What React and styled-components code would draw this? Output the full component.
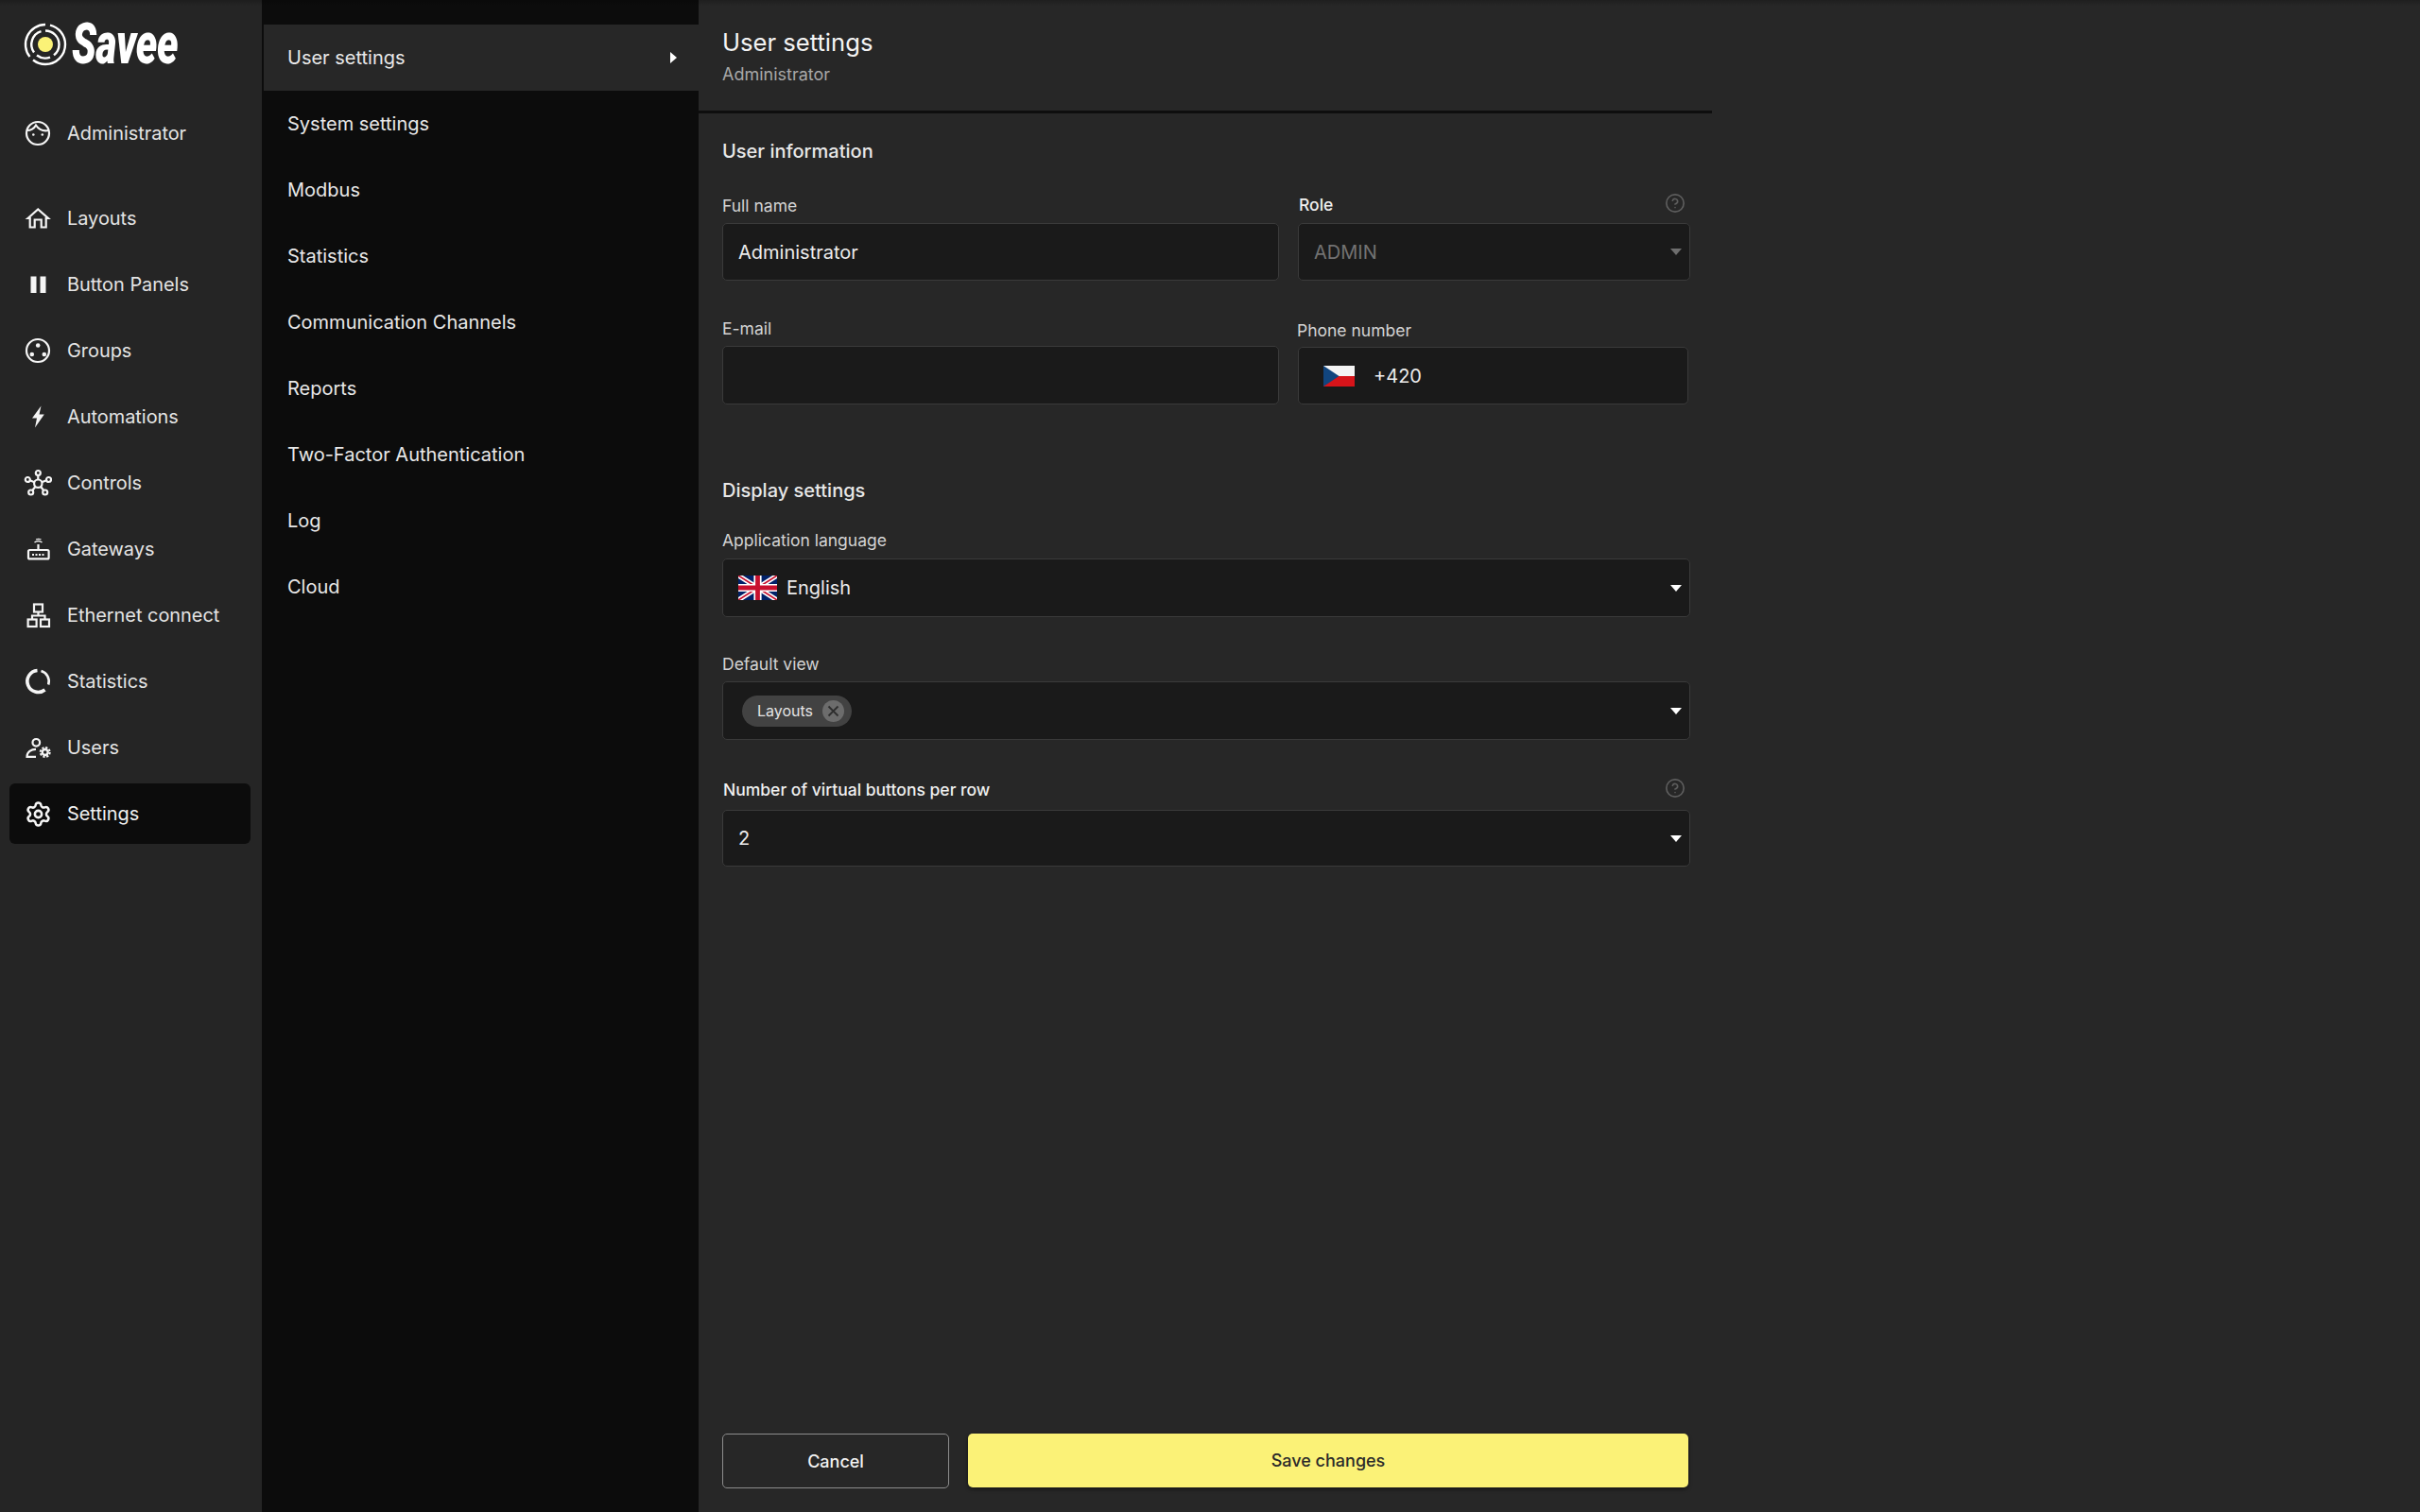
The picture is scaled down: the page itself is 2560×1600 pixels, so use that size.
import React from "react";
import styled, { createGlobalStyle } from "styled-components";
import { Settings as GearIcon, CircleHelp } from "lucide-react";

const Global = createGlobalStyle`
  html, body { margin: 0; padding: 0; height: 100%; background: #272727; }
  * { box-sizing: border-box; }
  body { font-family: Inter, "Noto Sans", sans-serif; color: #e8e8e8; -webkit-font-smoothing: antialiased; }
`;

const Page = styled.div`
  position: relative;
  display: flex;
  width: 100%;
  height: 100vh;
  min-height: 1600px;
  overflow: hidden;
  background: #272727;
  &::after {
    content: "";
    position: absolute;
    inset: 0 0 auto 0;
    height: 6px;
    background: linear-gradient(rgba(0, 0, 0, 0.22), rgba(0, 0, 0, 0));
    pointer-events: none;
  }
`;

const Sidebar = styled.nav`
  flex: 0 0 277px;
  display: flex;
  flex-direction: column;
  padding: 0 12px 0 10px;
  background: #252525;
`;

const LogoWrap = styled.div`
  height: 94px;
  margin-bottom: 15px;
  padding: 0 0 0 15px;
  display: flex;
  align-items: center;
  gap: 5px;
`;

const LogoText = styled.span`
  display: inline-block;
  font-family: Roboto, "Liberation Sans", sans-serif;
  font-style: italic;
  font-weight: 900;
  font-size: 61px;
  line-height: 1;
  color: #fff;
  letter-spacing: -0.5px;
  transform: scaleX(0.7);
  transform-origin: left center;
  position: relative;
  top: -1px;
`;

const NavGroup = styled.div`
  display: flex;
  flex-direction: column;
  gap: 6px;
  margin-bottom: ${(p) => p.$mb || 0}px;
`;

const NavItem = styled.a`
  display: flex;
  align-items: center;
  gap: 16px;
  height: 64px;
  padding-left: 15px;
  border-radius: 6px;
  font-size: 19.9px;
  color: ${(p) => (p.$active ? "#f0f0f0" : "#e4e4e4")};
  background: ${(p) => (p.$active ? "#0c0c0c" : "transparent")};
`;

const IconBox = styled.svg.attrs({ viewBox: "0 0 30 30", width: 30, height: 30, fill: "none" })`
  flex: 0 0 30px;
  stroke: #f5f5f5;
  stroke-width: 2.2;
`;

const LucideBox = styled.span`
  flex: 0 0 30px;
  display: flex;
  align-items: center;
  justify-content: center;
  color: #f5f5f5;
`;

const SubMenu = styled.div`
  flex: 0 0 462px;
  padding: 26px 0 0 2px;
  background: #0c0c0c;
  display: flex;
  flex-direction: column;
`;

const SubItem = styled.a`
  display: flex;
  align-items: center;
  justify-content: space-between;
  height: 70px;
  padding: 0 23px 0 25px;
  font-size: 20px;
  color: #e8e8e8;
  background: ${(p) => (p.$active ? "#272727" : "transparent")};
`;

const RightCaret = styled.span`
  width: 0;
  height: 0;
  border-left: 7px solid #fff;
  border-top: 6px solid transparent;
  border-bottom: 6px solid transparent;
`;

const Main = styled.main`
  flex: 0 0 1072px;
  display: flex;
  flex-direction: column;
  background: #272727;
`;

const Header = styled.header`
  height: 120px;
  padding: 27px 25px 0;
  border-bottom: 3px solid #0e0e0e;
`;

const Title = styled.h1`
  margin: 0;
  font-size: 25.6px;
  line-height: 36px;
  font-weight: 400;
  color: #f4f4f4;
`;

const Subtitle = styled.div`
  margin-top: 4px;
  font-size: 18px;
  line-height: 24px;
  color: #a8a8a8;
`;

const Form = styled.div`
  flex: 1;
  display: flex;
  flex-direction: column;
  padding: 0 23px 25px 25px;
`;

const SectionTitle = styled.h2`
  margin: ${(p) => p.$top}px 0 0;
  font-size: 20px;
  line-height: 24px;
  font-weight: 500;
  color: #e8e8e8;
`;

const Row = styled.div`
  display: grid;
  grid-template-columns: 589px 415px;
  column-gap: 20px;
  margin-top: ${(p) => p.$top}px;
`;

const Field = styled.div`
  margin-top: ${(p) => p.$top || 0}px;
  min-width: 0;
`;

const LabelRow = styled.div`
  display: flex;
  align-items: center;
  justify-content: space-between;
  height: 22px;
  margin-bottom: ${(p) => p.$mb}px;
  padding-left: ${(p) => p.$indent || 0}px;
  margin-left: ${(p) => p.$outdent || 0}px;
  margin-top: ${(p) => p.$nudge || 0}px;
`;

const Label = styled.label`
  font-size: 17.5px;
  line-height: 22px;
  color: ${(p) => (p.$strong ? "#f0f0f0" : "#d4d4d4")};
  font-weight: ${(p) => (p.$strong ? 500 : 400)};
`;

const Help = styled.span`
  display: flex;
  margin-right: 5px;
  margin-top: -5px;
  color: #5e5e5e;
`;

const InputBox = styled.div`
  display: flex;
  align-items: center;
  justify-content: space-between;
  height: ${(p) => p.$h || 61}px;
  padding: ${(p) => p.$pad || "0 8px 0 16px"};
  margin-right: ${(p) => p.$mr || 0}px;
  background: #1a1a1a;
  border: 1.5px solid #3a3a3a;
  border-radius: 5px;
  font-size: 20px;
  color: ${(p) => (p.$muted ? "#727272" : "#ececec")};
`;

const Inline = styled.span`
  display: flex;
  align-items: center;
  gap: ${(p) => p.$gap}px;
`;

const Caret = styled.span`
  width: 0;
  height: 0;
  border-left: 6px solid transparent;
  border-right: 6px solid transparent;
  border-top: 7px solid ${(p) => (p.$muted ? "#6e6e6e" : "#fff")};
`;

const Chip = styled.span`
  display: inline-flex;
  align-items: center;
  justify-content: space-between;
  width: 116px;
  height: 33px;
  padding: 0 8px 0 16px;
  border-radius: 17px;
  background: #424242;
  font-size: 16px;
  color: #e4e4e4;
`;

const ChipClose = styled.span`
  display: flex;
  align-items: center;
  justify-content: center;
  width: 23px;
  height: 23px;
  border-radius: 50%;
  background: #6c6c6c;
`;

const Footer = styled.div`
  margin-top: auto;
  display: flex;
  gap: 20px;
  align-items: flex-start;
`;

const Cancel = styled.button`
  width: 240px;
  height: 58px;
  background: transparent;
  border: 1.5px solid #8c8c8c;
  border-radius: 5px;
  font: 500 18px Inter, sans-serif;
  color: #f2f2f2;
`;

const Save = styled.button`
  flex: 0 0 762px;
  height: 57px;
  background: #fbf277;
  border: none;
  border-radius: 5px;
  font: 500 18px Inter, sans-serif;
  color: #2a2a2a;
  box-shadow: 0 2px 4px rgba(0, 0, 0, 0.45);
`;

const LogoMark = () => (
  <svg width="46" height="46" viewBox="0 0 46 46" fill="none" stroke="#fff" strokeWidth="2.4">
    <circle cx="23" cy="23" r="8" fill="#fbf277" stroke="none" />
    <path d="M28 2.6A21 21 0 0 1 44 23A21 21 0 0 1 23 44A21 21 0 0 1 10 39.5" />
    <path d="M6.5 36A21 21 0 0 1 23 2" />
    <path d="M23 8.5A14.5 14.5 0 0 1 37.5 23A14.5 14.5 0 0 1 32 34.4" />
    <path d="M28 36.6A14.5 14.5 0 0 1 14 34.5" />
    <path d="M11 31.5A14.5 14.5 0 0 1 18.5 9.2" />
  </svg>
);

const FaceIcon = () => (
  <IconBox>
    <circle cx="15" cy="15" r="12" />
    <path d="M3.6 12C8 12 11 10 13 6.5C16 11 21 13 26.4 12" />
    <circle cx="10.3" cy="16.5" r="1.3" fill="#f5f5f5" stroke="none" />
    <circle cx="19.8" cy="16.5" r="1.3" fill="#f5f5f5" stroke="none" />
  </IconBox>
);
const HomeIcon = () => (
  <IconBox>
    <path d="M4.5 15L15.2 5.5L26 15H23.7V24.5H18.7V16.5H11.7V24.5H6.7V15Z" />
  </IconBox>
);
const PanelsIcon = () => (
  <IconBox>
    <rect x="7.5" y="6.5" width="6" height="17.5" fill="#f5f5f5" stroke="none" />
    <rect x="17.5" y="6.5" width="6" height="17.5" fill="#f5f5f5" stroke="none" />
  </IconBox>
);
const GroupsIcon = () => (
  <IconBox>
    <circle cx="15" cy="15" r="12" />
    <circle cx="15.2" cy="9.5" r="2.3" fill="#f5f5f5" stroke="none" />
    <circle cx="8.8" cy="19" r="2.3" fill="#f5f5f5" stroke="none" />
    <circle cx="21.8" cy="19" r="2.3" fill="#f5f5f5" stroke="none" />
  </IconBox>
);
const BoltIcon = () => (
  <IconBox>
    <path d="M18.5 3.5L9 16.5H14L12 26.5L21.8 12.5H16.5Z" fill="#f5f5f5" stroke="none" />
  </IconBox>
);
const HubIcon = () => (
  <IconBox>
    <circle cx="15.3" cy="15.7" r="4.2" />
    <circle cx="15.3" cy="4.5" r="2.5" />
    <circle cx="4.3" cy="11.5" r="2.5" />
    <circle cx="26.5" cy="11.5" r="2.5" />
    <circle cx="7.7" cy="25" r="2.5" />
    <circle cx="22.7" cy="25" r="2.5" />
    <path d="M15.3 7V11.5M6.6 12.3L11.4 14.3M24.2 12.3L19.2 14.3M9.2 23L12.6 18.8M21.2 23L17.9 18.8" />
  </IconBox>
);
const RouterIcon = () => (
  <IconBox>
    <rect x="5" y="16" width="21.6" height="9.4" rx="1.5" />
    <path d="M15.5 16V10" />
    <path d="M9 21H11M12.5 21H14.5M16 21H18M19.5 21H21.5" strokeWidth="2" />
    <path d="M11.5 8A6.5 6.5 0 0 1 19.5 8" strokeWidth="1.5" />
    <path d="M13 4.8A8 8 0 0 1 18.5 4.8" strokeWidth="1.2" />
  </IconBox>
);
const NetworkIcon = () => (
  <IconBox>
    <rect x="11" y="3.5" width="9" height="8" />
    <rect x="4.6" y="19.5" width="9" height="7.5" />
    <rect x="18" y="19.5" width="9" height="7.5" />
    <path d="M15.5 11.5V15.5M9 19.5V15.5H22.5V19.5" />
  </IconBox>
);
const RingIcon = () => (
  <IconBox>
    <path d="M14.5 3.5A11.5 11.5 0 1 0 22.5 24" strokeWidth="3.6" />
    <path d="M18.5 4A11.5 11.5 0 0 1 26.2 18.5" strokeWidth="2.6" />
  </IconBox>
);
const UsersIcon = () => (
  <IconBox>
    <circle cx="13.3" cy="9.8" r="3.8" />
    <path d="M13 16.8C8 16.8 3.5 19.5 3.5 24.8H13" />
    <circle cx="22.7" cy="20" r="3" strokeWidth="2.4" />
    <circle cx="22.7" cy="20" r="5" strokeWidth="2" strokeDasharray="2.3 1.6" />
  </IconBox>
);

const CzechFlag = () => (
  <svg width="33" height="22" viewBox="0 0 33 22">
    <rect width="33" height="11" fill="#f4f4f4" />
    <rect y="11" width="33" height="11" fill="#d7141a" />
    <path d="M0 0L16.5 11L0 22Z" fill="#11457e" />
  </svg>
);
const UkFlag = () => (
  <svg width="41" height="26" viewBox="0 0 60 38">
    <rect width="60" height="38" fill="#012169" />
    <path d="M0 0L60 38M60 0L0 38" stroke="#fff" strokeWidth="7.5" />
    <path d="M0 0L60 38M60 0L0 38" stroke="#c8102e" strokeWidth="2.5" />
    <path d="M30 0V38M0 19H60" stroke="#fff" strokeWidth="12" />
    <path d="M30 0V38M0 19H60" stroke="#c8102e" strokeWidth="7" />
  </svg>
);

const navItems = [
  ["Layouts", HomeIcon],
  ["Button Panels", PanelsIcon],
  ["Groups", GroupsIcon],
  ["Automations", BoltIcon],
  ["Controls", HubIcon],
  ["Gateways", RouterIcon],
  ["Ethernet connect", NetworkIcon],
  ["Statistics", RingIcon],
  ["Users", UsersIcon],
];

const subItems = [
  "System settings",
  "Modbus",
  "Statistics",
  "Communication Channels",
  "Reports",
  "Two-Factor Authentication",
  "Log",
  "Cloud",
];

export default function App() {
  return (
    <Page>
      <Global />
      <Sidebar>
        <LogoWrap>
          <LogoMark />
          <LogoText>Savee</LogoText>
        </LogoWrap>
        <NavGroup $mb={26}>
          <NavItem>
            <FaceIcon />
            Administrator
          </NavItem>
        </NavGroup>
        <NavGroup>
          {navItems.map(([name, Icon]) => (
            <NavItem key={name}>
              <Icon />
              {name}
            </NavItem>
          ))}
          <NavItem $active>
            <LucideBox>
              <GearIcon size={29} strokeWidth={2.1} />
            </LucideBox>
            Settings
          </NavItem>
        </NavGroup>
      </Sidebar>

      <SubMenu>
        <SubItem $active>
          User settings
          <RightCaret />
        </SubItem>
        {subItems.map((s) => (
          <SubItem key={s}>{s}</SubItem>
        ))}
      </SubMenu>

      <Main>
        <Header>
          <Title>User settings</Title>
          <Subtitle>Administrator</Subtitle>
        </Header>
        <Form>
          <SectionTitle $top={28}>User information</SectionTitle>
          <Row $top={34}>
            <Field>
              <LabelRow $mb={7} $nudge={1}>
                <Label>Full name</Label>
              </LabelRow>
              <InputBox>Administrator</InputBox>
            </Field>
            <Field>
              <LabelRow $mb={8} $indent={1}>
                <Label $strong>Role</Label>
                <Help>
                  <CircleHelp size={22} strokeWidth={1.8} />
                </Help>
              </LabelRow>
              <InputBox $muted>
                ADMIN
                <Caret $muted />
              </InputBox>
            </Field>
          </Row>
          <Row $top={40}>
            <Field>
              <LabelRow $mb={7}>
                <Label>E-mail</Label>
              </LabelRow>
              <InputBox $h={62} />
            </Field>
            <Field>
              <LabelRow $mb={6} $outdent={-1} $nudge={2}>
                <Label>Phone number</Label>
              </LabelRow>
              <InputBox $mr={2} $pad="0 10px 0 26px">
                <Inline $gap={20}>
                  <CzechFlag />
                  +420
                </Inline>
              </InputBox>
            </Field>
          </Row>

          <SectionTitle $top={79}>Display settings</SectionTitle>
          <Field $top={30}>
            <LabelRow $mb={8}>
              <Label>Application language</Label>
            </LabelRow>
            <InputBox $h={62} $pad="0 8px 0 16px">
              <Inline $gap={10}>
                <UkFlag />
                English
              </Inline>
              <Caret />
            </InputBox>
          </Field>
          <Field $top={39}>
            <LabelRow $mb={7}>
              <Label>Default view</Label>
            </LabelRow>
            <InputBox $h={62} $pad="0 8px 0 20px">
              <Chip>
                Layouts
                <ChipClose>
                  <svg width="13" height="13" viewBox="0 0 13 13" stroke="#2e2e2e" strokeWidth="1.8">
                    <path d="M1.5 1.5L11.5 11.5M11.5 1.5L1.5 11.5" />
                  </svg>
                </ChipClose>
              </Chip>
              <Caret />
            </InputBox>
          </Field>
          <Field $top={42}>
            <LabelRow $mb={10} $indent={1}>
              <Label $strong>Number of virtual buttons per row</Label>
              <Help>
                <CircleHelp size={22} strokeWidth={1.8} />
              </Help>
            </LabelRow>
            <InputBox $h={60}>
              2
              <Caret />
            </InputBox>
          </Field>

          <Footer>
            <Cancel>Cancel</Cancel>
            <Save>Save changes</Save>
          </Footer>
        </Form>
      </Main>
    </Page>
  );
}
